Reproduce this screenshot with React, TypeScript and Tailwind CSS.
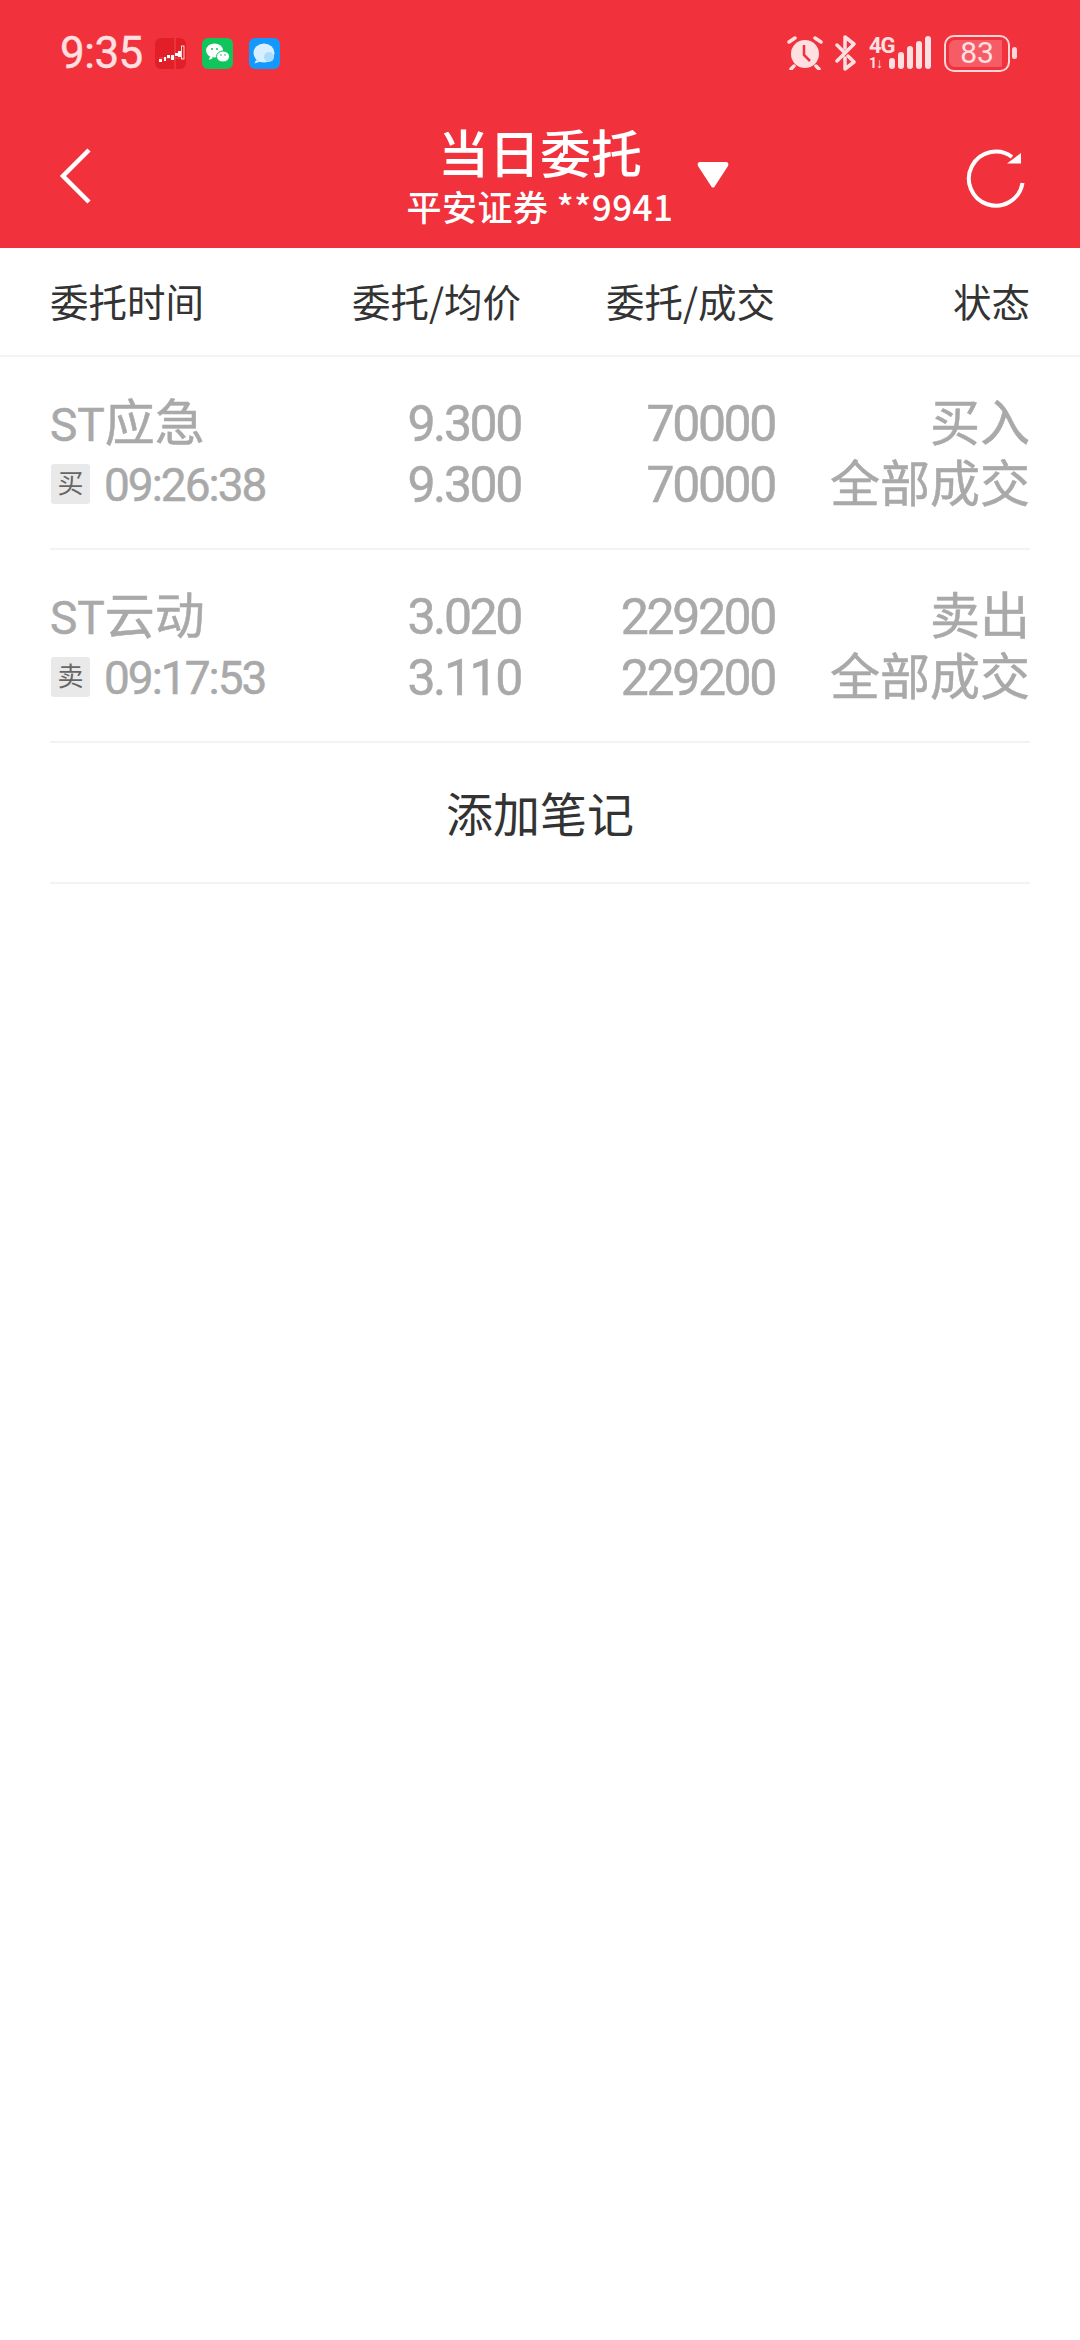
const cjk = "font-['Noto_Sans_CJK_SC',sans-serif]";
const num = "font-['Roboto','Noto_Sans_CJK_SC',sans-serif]";

function Row({ name, side, time, a, b, c, d, s }: { name: string; side: string; time: string; a: string; b: string; c: string; d: string; s: string }) {
  const digits = "text-right text-[50px] tracking-[-2.4px] [-webkit-text-stroke:0.5px_#a9a9a9]";
  return (
    <div className="mx-[50px] h-[193px] border-b-2 border-[#f3f3f3] pt-[37px]">
      <div className={`grid grid-cols-[217px_254px_254px_1fr] grid-rows-[61px_61px] text-[#a9a9a9] leading-[61px] ${num}`}>
        <div className="whitespace-nowrap text-[50px] [-webkit-text-stroke:0.5px_#a9a9a9]"><span className="text-[46px]">{name.slice(0, 2)}</span>{name.slice(2)}</div>
        <div className={digits}>{a}</div>
        <div className={digits}>{c}</div>
        <div className="text-right text-[50px] [-webkit-text-stroke:0.5px_#a9a9a9]">{side === "买" ? "买入" : "卖出"}</div>
        <div className="flex h-[61px] items-center whitespace-nowrap">
          <span className="mb-[4px] ml-px flex h-[40px] w-[39px] shrink-0 items-center justify-center rounded-[3px] bg-[#e9e9e9] text-[26px] leading-none text-[#666666]">{side}</span>
          <span className="ml-[14px] text-[46px] tracking-[-2px] [-webkit-text-stroke:0.5px_#a9a9a9]">{time}</span>
        </div>
        <div className={digits}>{b}</div>
        <div className={digits}>{d}</div>
        <div className="text-right text-[50px] [-webkit-text-stroke:0.5px_#a9a9a9]">{s}</div>
      </div>
    </div>
  );
}

export default function App() {
  return (
    <div className={`h-[2340px] w-[1080px] overflow-hidden bg-white ${cjk}`}>
      <div className="relative h-[248px] bg-[#f1323c]">
        <div className="flex h-[104px] items-center justify-between pl-[60px] pr-[63px] pt-[2px]">
          <div className="flex items-center">
            <span className="w-[82px] font-['Roboto',sans-serif] text-[44px] leading-none tracking-[-0.5px] text-[#ffe0e2] [-webkit-text-stroke:0.4px_#ffe0e2]">9:35</span>
            <svg width="31" height="31" viewBox="0 0 31 31" className="ml-[13px]">
              <rect width="31" height="31" rx="6" fill="#e21f26" />
              <path d="M4 20h24M20 0v31" stroke="#ee4b4f" strokeWidth="1" />
              <path d="M4 21h3v3H4zM9 19h2v4H9zM12 17h3v3h-3zM16 17h3v5h-3zM20 15h3v3h-3zM23 13h3v6h-3z" fill="#fff" />
              <rect x="26.500" y="8" width="2.500" height="13" fill="none" stroke="#fff" strokeWidth="0.800" />
            </svg>
            <svg width="31" height="31" viewBox="0 0 31 31" className="ml-[16px]">
              <rect width="31" height="31" rx="6" fill="#10c55b" />
              <ellipse cx="12.500" cy="12.500" rx="8.500" ry="7" fill="#fff" />
              <path d="M8 18l-1 4 4-2z" fill="#fff" />
              <ellipse cx="21" cy="18.500" rx="6.500" ry="5.500" fill="#fff" stroke="#10c55b" strokeWidth="1" />
              <circle cx="10" cy="11" r="1" fill="#10c55b" />
              <circle cx="15" cy="11" r="1" fill="#10c55b" />
              <circle cx="19" cy="17" r="0.800" fill="#10c55b" />
              <circle cx="23" cy="17" r="0.800" fill="#10c55b" />
            </svg>
            <svg width="31" height="31" viewBox="0 0 31 31" className="ml-[16px]">
              <rect width="31" height="31" rx="6" fill="#1598fb" />
              <ellipse cx="15" cy="15" rx="10.500" ry="9.500" fill="#d8efff" />
              <path d="M7 22l-1.500 3.500 6-2z" fill="#d8efff" />
              <circle cx="20" cy="19" r="5" fill="#a9dcfd" />
            </svg>
          </div>
          <div className="flex items-center">
            <svg width="36" height="34" viewBox="0 0 36 34" fill="none" stroke="#ffe0e2">
              <circle cx="18" cy="18" r="14" fill="#ffe0e2" stroke="none" />
              <path d="M17 9v10l6 6" stroke="#f1323c" strokeWidth="2.500" />
              <path d="M2 6l6-4M34 6l-6-4M7 30l-3 3M29 30l3 3" strokeWidth="3.500" strokeLinecap="round" />
            </svg>
            <svg width="24" height="36" viewBox="0 0 24 36" fill="none" stroke="#ffe0e2" strokeWidth="3.500" className="ml-[11px]" strokeLinejoin="round" strokeLinecap="round">
              <path d="M3 26L20 9 11 2v11M11 23v11l9-7-6-6M3 10l6 6" />
            </svg>
            <div className="ml-[11px] flex h-[36px] w-[26px] flex-col font-['Roboto',sans-serif] font-bold text-[#ffe0e2]">
              <span className="whitespace-nowrap text-[22px] leading-[21px] tracking-[-1px]">4G</span>
              <span className="whitespace-nowrap text-[14px] leading-[15px] tracking-[-1px]">1↓</span>
            </div>
            <svg width="44" height="34" viewBox="0 0 44 34" fill="#ffe0e2" className="ml-[-7px]">
              <rect x="1" y="22" width="6" height="11" rx="3" />
              <rect x="10" y="16" width="6" height="17" rx="3" />
              <rect x="19" y="10" width="6" height="23" rx="3" />
              <rect x="28" y="5" width="6" height="28" rx="3" />
              <rect x="37" y="0" width="6" height="33" rx="3" />
            </svg>
            <div className="relative ml-[12px] flex h-[37px] w-[66px] items-center overflow-hidden rounded-[10px] border-2 border-[#ffd5d8] p-[3px]">
              <div className="h-full w-[53px] rounded-l-[6px] bg-[#f65c65]" />
              <span className="absolute inset-0 flex items-center justify-center font-['Roboto',sans-serif] text-[30px] leading-none text-[#ffe0e2]">83</span>
            </div>
            <div className="ml-[2px] h-[12px] w-[5px] rounded-full bg-[#ffd5d8]" />
          </div>
        </div>
        <div className="flex h-[144px] items-start justify-between">
          <svg width="34" height="56" viewBox="0 0 34 56" fill="none" stroke="#fff" strokeWidth="4.500" className="ml-[59px] mt-[44px]">
            <path d="M30 2L4 28l26 26" />
          </svg>
          <div className="absolute left-[270px] top-[118px] flex w-[540px] flex-col items-center text-white">
            <span className="text-[51px] font-medium leading-[66px]">当日委托</span>
            <span className="whitespace-nowrap text-[35px] font-medium leading-[44px] tracking-[0.5px]">平安证券 **9941</span>
          </div>
          <svg width="32" height="26" viewBox="0 0 32 26" fill="#fff" className="absolute left-[697px] top-[162px]">
            <path d="M3 0h26c2 0 3 2 2 4L18 24c-1 2-3 2-4 0L1 4C0 2 1 0 3 0z" />
          </svg>
          <svg width="60" height="62" viewBox="0 0 60 62" fill="none" className="mr-[54px] mt-[42px]">
            <path d="M56.500 37A27 27 0 1 1 46 11" stroke="#fff" strokeWidth="4" />
            <path d="M55 7v10.500H41z" fill="#fff" />
          </svg>
        </div>
      </div>

      <div className="grid h-[109px] grid-cols-[217px_254px_254px_1fr] items-center border-b-2 border-[#f3f3f3] px-[50px] pb-[3px] text-[38.500px] leading-none text-[#333333]">
        <div>委托时间</div>
        <div className="whitespace-nowrap text-right">委托/均价</div>
        <div className="whitespace-nowrap text-right">委托/成交</div>
        <div className="text-right">状态</div>
      </div>

      <Row name="ST应急" side="买" time="09:26:38" a="9.300" b="9.300" c="70000" d="70000" s="全部成交" />
      <Row name="ST云动" side="卖" time="09:17:53" a="3.020" b="3.110" c="229200" d="229200" s="全部成交" />

      <div className="mx-[50px] flex h-[141px] items-center justify-center border-b-2 border-[#f3f3f3] pb-[3px] text-[47px] leading-none text-[#333333]">
        添加笔记
      </div>
    </div>
  );
}
